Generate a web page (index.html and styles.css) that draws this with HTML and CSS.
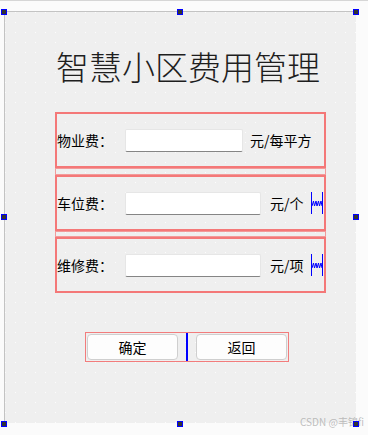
FILE: index.html
```html
<!DOCTYPE html>
<html lang="zh">
<head>
<meta charset="utf-8">
<title>智慧小区费用管理</title>
<link rel="stylesheet" href="styles.css">
</head>
<body>
<div class="page">
  <div class="form">
    <h1 class="title">智慧小区费用管理</h1>
    <div class="groups">
      <div class="box">
        <span class="label">物业费：</span>
        <div class="input"></div>
        <span class="unit">元/每平方</span>
      </div>
      <div class="sep"></div>
      <div class="box">
        <span class="label">车位费：</span>
        <div class="input wide"></div>
        <span class="unit unit-wide">元/个</span>
        <svg class="spring" width="12" height="22" viewBox="0 0 12 22"><path d="M0.5 0V22M11.5 0V22M1 14L2.5 9L3.5 14L5 9L6 14L7.5 9L8.5 14L10 9L11 14" fill="none" stroke="#0000ff" stroke-width="1"/></svg>
      </div>
      <div class="sep sep-b"></div>
      <div class="box">
        <span class="label">维修费：</span>
        <div class="input wide"></div>
        <span class="unit unit-wide">元/项</span>
        <svg class="spring" width="12" height="22" viewBox="0 0 12 22"><path d="M0.5 0V22M11.5 0V22M1 14L2.5 9L3.5 14L5 9L6 14L7.5 9L8.5 14L10 9L11 14" fill="none" stroke="#0000ff" stroke-width="1"/></svg>
      </div>
    </div>
    <div class="btnbar">
      <div class="btn">确定</div>
      <div class="vline"></div>
      <div class="btn">返回</div>
    </div>
  </div>
  <div class="handle h-tl"></div>
  <div class="handle h-tm"></div>
  <div class="handle h-tr"></div>
  <div class="handle h-ml"></div>
  <div class="handle h-mr"></div>
  <div class="handle h-bl"></div>
  <div class="handle h-bm"></div>
  <div class="watermark">CSDN @丰锦fi</div>
  <div class="handle h-br"></div>
</div>
</body>
</html>
```
FILE: styles.css
```css
html, body {
  margin: 0;
  padding: 0;
  background: #fbfbfb;
}
.page {
  position: relative;
  width: 368px;
  height: 435px;
  box-sizing: border-box;
  border-top: 1px solid #d6d6d6;
  padding: 10px 0 0 4px;
  font-family: "Noto Sans CJK SC", "Noto Sans", sans-serif;
  color: #000;
  overflow: hidden;
}
.form {
  width: 352px;
  height: 412px;
  box-sizing: border-box;
  border-top: 1px solid #c3c3c3;
  border-left: 1px solid #c3c3c3;
  background-color: #efefef;
  background-image:
    linear-gradient(to bottom, transparent 1px, #efefef 1px),
    linear-gradient(to right, #fdfdfd 1px, #efefef 1px);
  background-size: 10px 10px;
  display: flex;
  flex-direction: column;
  align-items: flex-start;
}
.title {
  margin: 34px 0 0 0;
  padding-left: 51px;
  font-size: 33px;
  line-height: 40px;
  font-weight: 300;
  color: #1e1e1e;
  letter-spacing: 0;
}
.groups {
  margin: 26px 0 0 50px;
  width: 271px;
  display: flex;
  flex-direction: column;
}
.box {
  height: 56px;
  box-sizing: border-box;
  border: 2px solid #f47878;
  display: flex;
  align-items: center;
  font-size: 14px;
}
.label {
  width: 68px;
  flex: none;
  white-space: nowrap;
}
.input {
  width: 118px;
  height: 23px;
  flex: none;
  box-sizing: border-box;
  background: #fff;
  border: 1px solid #e6e6e6;
  border-bottom: 1px solid #858585;
  border-radius: 2px;
}
.input.wide {
  width: 136px;
}
.unit {
  margin-left: 7px;
  white-space: nowrap;
}
.unit-wide {
  margin-left: 9px;
}
.spring {
  margin-left: auto;
  margin-right: 1px;
  display: block;
  flex: none;
}
.sep {
  height: 7px;
  box-sizing: border-box;
  border: 1px solid #f29a9a;
}
.sep-b {
  height: 6px;
}
.btnbar {
  margin: 39px 0 0 80px;
  width: 204px;
  height: 30px;
  box-sizing: border-box;
  border: 1px solid #f27c7c;
  padding: 0 1px;
  display: flex;
  align-items: center;
}
.btn {
  width: 91px;
  height: 26px;
  box-sizing: border-box;
  border: 1px solid #cfcfcf;
  border-radius: 4px;
  background: #fdfdfd;
  font-size: 14px;
  line-height: 24px;
  text-align: center;
}
.vline {
  width: 2px;
  align-self: stretch;
  margin: 0 8px;
  background: #0000ff;
}
.handle {
  position: absolute;
  width: 6px;
  height: 6px;
  box-sizing: border-box;
  border: 1px solid #0000ff;
  background: #333;
}
.h-tl { left: 1px; top: 8px; }
.h-tm { left: 177px; top: 8px; }
.h-tr { left: 353px; top: 8px; }
.h-ml { left: 1px; top: 213px; }
.h-mr { left: 353px; top: 213px; }
.h-bl { left: 1px; top: 420px; }
.h-bm { left: 177px; top: 420px; }
.h-br { left: 353px; top: 420px; }
.watermark {
  position: absolute;
  left: 300px;
  top: 414px;
  font-size: 10px;
  line-height: 13px;
  color: rgba(150, 150, 150, 0.6);
  white-space: nowrap;
}
```
